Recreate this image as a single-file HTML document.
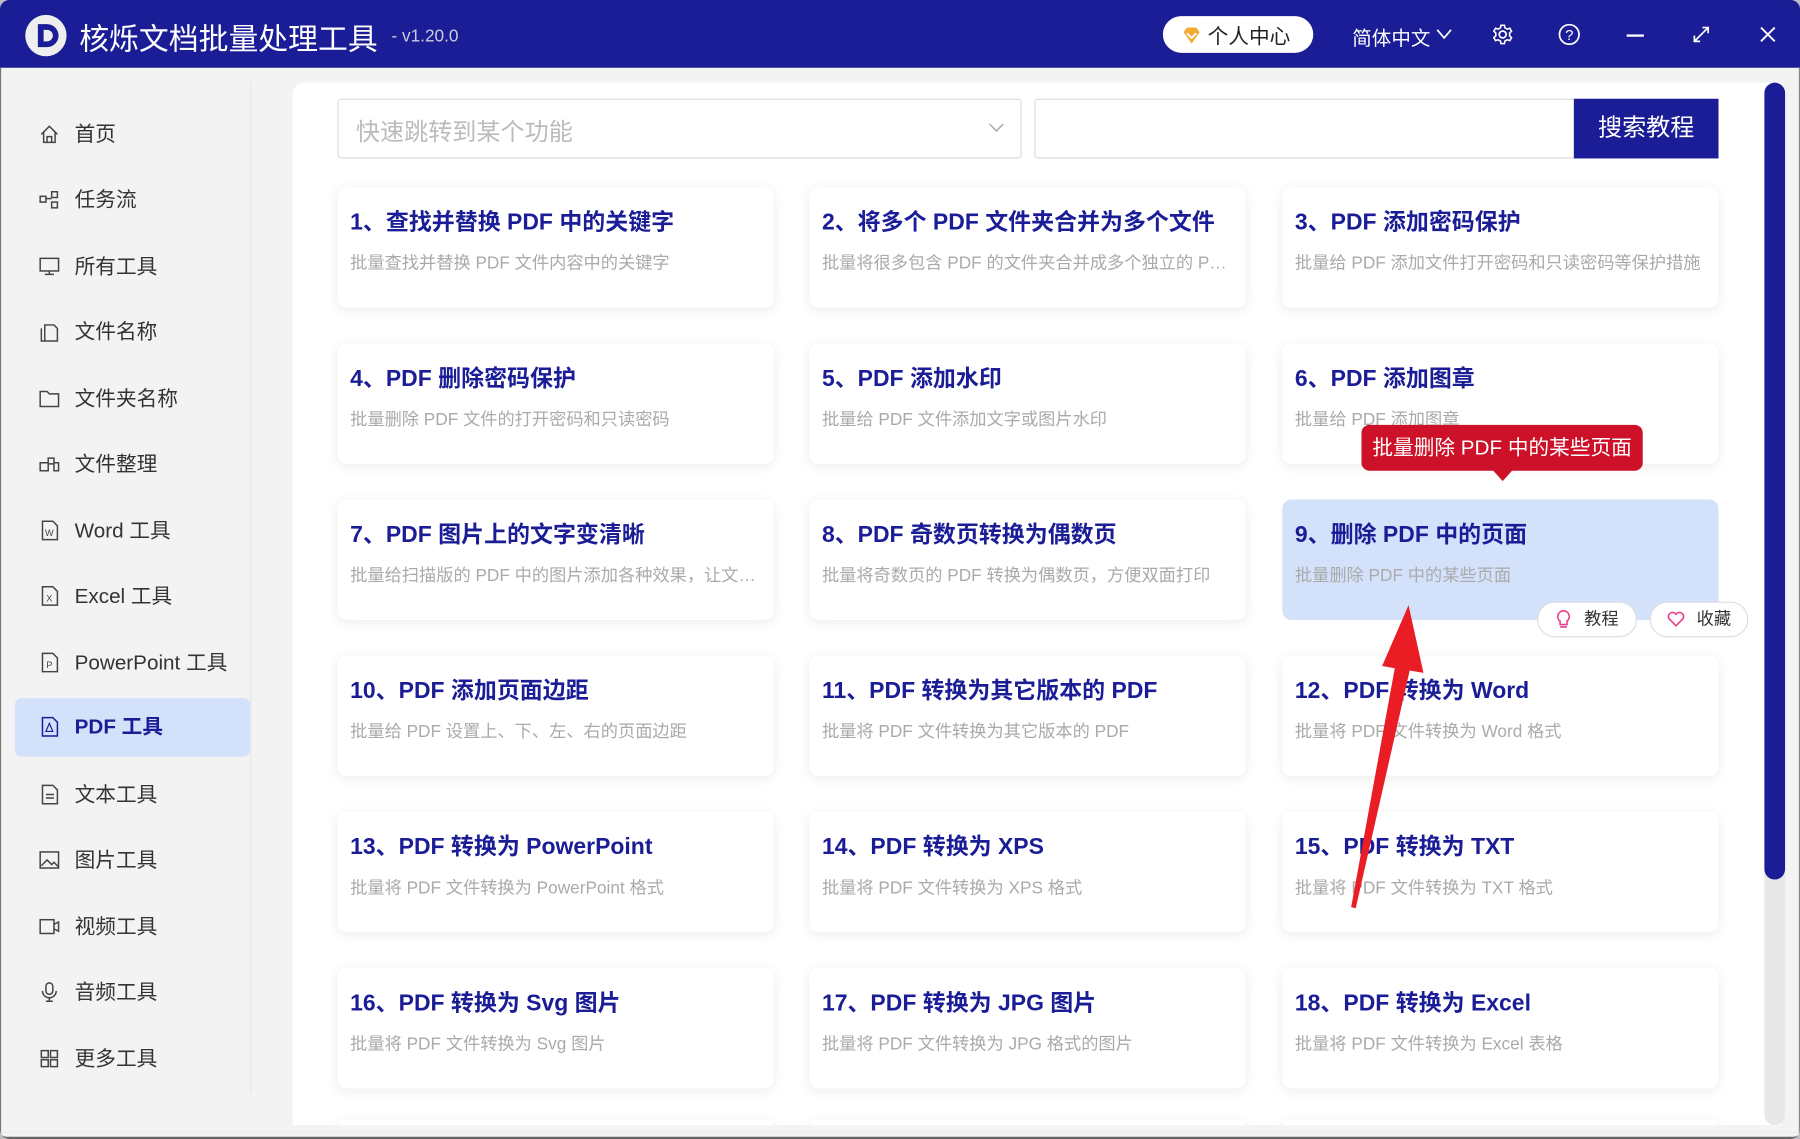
<!DOCTYPE html>
<html><head><meta charset="utf-8">
<style>
*{margin:0;padding:0;box-sizing:border-box}
html,body{width:1800px;height:1139px;overflow:hidden;background:#bdbdc2}
#w{position:absolute;left:0;top:0;width:1568px;height:992px;transform:scale(1.147959,1.148185);transform-origin:0 0;font-family:"Liberation Sans","Noto Sans CJK SC",sans-serif;background:#f3f3f3;overflow:hidden;border-radius:8px 8px 8px 8px}
#tb{position:absolute;left:0;top:0;width:1568px;height:59px;background:#1a1d96}
.abs{position:absolute}
#side .it{position:absolute;left:13px;width:205px;height:51px;font-size:18px;color:#333;line-height:51px;padding-left:52px;border-radius:6px}
#side .it svg{position:absolute;left:21px;top:16px}
#side .act{background:#d3e1fb;color:#1a1d96;font-weight:bold}
#panel{position:absolute;left:255px;top:72px;width:1296px;height:908px;background:#fff;border-radius:10px 0 0 0}
.card{position:absolute;width:380px;height:105px;background:#fff;border-radius:8px;box-shadow:0 2px 10px rgba(0,0,0,0.08)}
.card h3{position:absolute;left:11px;top:14px;font-size:20px;color:#1a1d96;font-weight:bold;white-space:nowrap}
.card p{position:absolute;left:11px;top:55px;font-size:15px;color:#aaa;white-space:nowrap;width:360px;overflow:hidden;text-overflow:ellipsis}
.pill{position:absolute;height:31px;background:#fff;border:1px solid #ddd;border-radius:16px;font-size:15px;color:#333;line-height:29px}
</style></head><body><div id="w">
<div id="tb">
 <svg class="abs" style="left:21px;top:12px" width="38" height="38" viewBox="0 0 38 38"><circle cx="19" cy="19" r="18" fill="#eee"/><path d="M12 9h8a10 10 0 0 1 0 20h-8z" fill="#1a1d96"/><path d="M17 14h3a5 5 0 0 1 0 10h-3z" fill="#eee"/></svg>
 <div class="abs" style="left:69px;top:14px;font-size:26px;color:#fff">核烁文档批量处理工具</div>
 <div class="abs" style="left:341px;top:23px;font-size:15px;color:#ccd">- v1.20.0</div>
 <div class="abs" style="left:1013px;top:14px;width:131px;height:32px;background:#fff;border-radius:16px"></div>
 <svg class="abs" style="left:1029px;top:22px" width="18" height="18" viewBox="0 0 18 18"><path d="M2 6l3-4h8l3 4-7 10z" fill="#f4a935"/><path d="M5 7l4 4 4-4" stroke="#fff" stroke-width="1.6" fill="none"/></svg>
 <div class="abs" style="left:1052px;top:18px;font-size:18px;color:#222">个人中心</div>
 <div class="abs" style="left:1178px;top:19px;font-size:17px;color:#fff">简体中文</div>
 <svg class="abs" style="left:1251px;top:24px" width="14" height="12"><path d="M1 2l6 7 6-7" stroke="#fff" stroke-width="1.5" fill="none"/></svg>
 <svg class="abs" style="left:1299px;top:20px" width="20" height="20" viewBox="0 0 20 20"><circle cx="10" cy="10" r="3" stroke="#fff" stroke-width="1.5" fill="none"/><path d="M8.5 2h3l.5 2.3 2 1.1 2.2-.8 1.5 2.6-1.7 1.6v2.4l1.7 1.6-1.5 2.6-2.2-.8-2 1.1-.5 2.3h-3l-.5-2.3-2-1.1-2.2.8-1.5-2.6 1.7-1.6V8.8L2.3 7.2l1.5-2.6 2.2.8 2-1.1z" stroke="#fff" stroke-width="1.4" fill="none"/></svg>
 <svg class="abs" style="left:1357px;top:20px" width="20" height="20"><circle cx="10" cy="10" r="8.5" stroke="#fff" stroke-width="1.5" fill="none"/><text x="10" y="15" font-size="13" fill="#fff" text-anchor="middle" font-family="Liberation Sans">?</text></svg>
 <div class="abs" style="left:1417px;top:30px;width:15px;height:2px;background:#fff"></div>
 <svg class="abs" style="left:1474px;top:22px" width="16" height="16"><path d="M2 14L14 2M9 2h5v5M2 9v5h5" stroke="#fff" stroke-width="1.5" fill="none"/></svg>
 <svg class="abs" style="left:1532px;top:22px" width="16" height="16"><path d="M2 2l12 12M14 2L2 14" stroke="#fff" stroke-width="1.6"/></svg>
</div>
<div class="abs" style="left:218px;top:72px;width:1px;height:880px;background:#e6e6e6"></div>
<div id="side">
 <div class="it" style="top:92px"><svg width="18" height="18"><path d="M2 9l7-7 7 7M4 7v9h10V7M7 16v-5h4v5" stroke="#444" stroke-width="1.3" fill="none"/></svg>首页</div>
 <div class="it" style="top:149px"><svg width="18" height="18"><rect x="1" y="6" width="5" height="5" stroke="#444" fill="none" stroke-width="1.3"/><rect x="11" y="2" width="5" height="5" stroke="#444" fill="none" stroke-width="1.3"/><rect x="11" y="11" width="5" height="5" stroke="#444" fill="none" stroke-width="1.3"/><path d="M6 8h5" stroke="#444" stroke-width="1.3"/></svg>任务流</div>
 <div class="it" style="top:207px"><svg width="18" height="18"><rect x="1" y="2" width="16" height="11" stroke="#444" fill="none" stroke-width="1.3"/><path d="M5 16h8M9 13v3" stroke="#444" stroke-width="1.3"/></svg>所有工具</div>
 <div class="it" style="top:264px"><svg width="18" height="18"><path d="M5 3h8l3 3v11H5zM2 6v11h3" stroke="#444" fill="none" stroke-width="1.3"/></svg>文件名称</div>
 <div class="it" style="top:322px"><svg width="18" height="18"><path d="M1 3h6l2 2h8v11H1z" stroke="#444" fill="none" stroke-width="1.3"/></svg>文件夹名称</div>
 <div class="it" style="top:379px"><svg width="18" height="18"><path d="M1 8h7v7H1zM8 4h5v5H8zM13 8h4v7h-4z" stroke="#444" fill="none" stroke-width="1.3"/></svg>文件整理</div>
 <div class="it" style="top:437px"><svg width="18" height="18"><path d="M3 1h9l4 4v12H3z" stroke="#444" fill="none" stroke-width="1.3"/><text x="9" y="14" font-size="8" fill="#444" text-anchor="middle">W</text></svg>Word 工具</div>
 <div class="it" style="top:494px"><svg width="18" height="18"><path d="M3 1h9l4 4v12H3z" stroke="#444" fill="none" stroke-width="1.3"/><text x="9" y="14" font-size="8" fill="#444" text-anchor="middle">X</text></svg>Excel 工具</div>
 <div class="it" style="top:552px"><svg width="18" height="18"><path d="M3 1h9l4 4v12H3z" stroke="#444" fill="none" stroke-width="1.3"/><text x="9" y="14" font-size="8" fill="#444" text-anchor="middle">P</text></svg>PowerPoint 工具</div>
 <div class="it act" style="top:608px"><svg width="18" height="18"><path d="M3 1h9l4 4v12H3z" stroke="#1a1d96" fill="none" stroke-width="1.3"/><path d="M6 13l3-7 3 7z" stroke="#1a1d96" fill="none"/></svg>PDF 工具</div>
 <div class="it" style="top:667px"><svg width="18" height="18"><path d="M3 1h9l4 4v12H3zM6 9h7M6 12h7" stroke="#444" fill="none" stroke-width="1.3"/></svg>文本工具</div>
 <div class="it" style="top:724px"><svg width="18" height="18"><rect x="1" y="2" width="16" height="14" stroke="#444" fill="none" stroke-width="1.3"/><path d="M2 14l5-5 4 4 2-2 4 4" stroke="#444" fill="none" stroke-width="1.3"/></svg>图片工具</div>
 <div class="it" style="top:782px"><svg width="18" height="18"><rect x="1" y="3" width="12" height="12" stroke="#444" fill="none" stroke-width="1.3"/><path d="M13 7l4-2v8l-4-2" stroke="#444" fill="none" stroke-width="1.3"/></svg>视频工具</div>
 <div class="it" style="top:839px"><svg width="18" height="18"><rect x="6" y="1" width="6" height="10" rx="3" stroke="#444" fill="none" stroke-width="1.3"/><path d="M3 8a6 6 0 0 0 12 0M9 14v3M6 17h6" stroke="#444" fill="none" stroke-width="1.3"/></svg>音频工具</div>
 <div class="it" style="top:897px"><svg width="18" height="18"><path d="M2 2h6v6H2zM10 2h6v6h-6zM2 10h6v6H2zM10 10h6v6h-6z" stroke="#444" fill="none" stroke-width="1.3"/></svg>更多工具</div>
</div>
<div id="panel"></div>
<div class="abs" style="left:294px;top:86px;width:596px;height:52px;border:1px solid #dcdcdc;border-radius:3px;background:#fff"></div>
<div class="abs" style="left:310px;top:99px;font-size:21px;color:#bbb">快速跳转到某个功能</div>
<svg class="abs" style="left:861px;top:106px" width="14" height="10"><path d="M1 2l6 6 6-6" stroke="#aaa" stroke-width="1.3" fill="none"/></svg>
<div class="abs" style="left:901px;top:86px;width:471px;height:52px;border:1px solid #dcdcdc;border-radius:3px 0 0 3px;background:#fff"></div>
<div class="abs" style="left:1371px;top:86px;width:126px;height:52px;background:#1a1d96;color:#fff;font-size:21px;line-height:52px;text-align:center">搜索教程</div>

<div class="card" style="left:294px;top:163px"><h3>1、查找并替换 PDF 中的关键字</h3><p>批量查找并替换 PDF 文件内容中的关键字</p></div>
<div class="card" style="left:705px;top:163px"><h3>2、将多个 PDF 文件夹合并为多个文件</h3><p>批量将很多包含 PDF 的文件夹合并成多个独立的 PDF 文件</p></div>
<div class="card" style="left:1117px;top:163px"><h3>3、PDF 添加密码保护</h3><p>批量给 PDF 添加文件打开密码和只读密码等保护措施</p></div>
<div class="card" style="left:294px;top:299px"><h3>4、PDF 删除密码保护</h3><p>批量删除 PDF 文件的打开密码和只读密码</p></div>
<div class="card" style="left:705px;top:299px"><h3>5、PDF 添加水印</h3><p>批量给 PDF 文件添加文字或图片水印</p></div>
<div class="card" style="left:1117px;top:299px"><h3>6、PDF 添加图章</h3><p>批量给 PDF 添加图章</p></div>
<div class="card" style="left:294px;top:435px"><h3>7、PDF 图片上的文字变清晰</h3><p>批量给扫描版的 PDF 中的图片添加各种效果，让文字…</p></div>
<div class="card" style="left:705px;top:435px"><h3>8、PDF 奇数页转换为偶数页</h3><p>批量将奇数页的 PDF 转换为偶数页，方便双面打印</p></div>
<div class="card" style="left:1117px;top:435px;background:#d3e1fb;box-shadow:none"><h3>9、删除 PDF 中的页面</h3><p>批量删除 PDF 中的某些页面</p></div>
<div class="card" style="left:294px;top:571px"><h3>10、PDF 添加页面边距</h3><p>批量给 PDF 设置上、下、左、右的页面边距</p></div>
<div class="card" style="left:705px;top:571px"><h3>11、PDF 转换为其它版本的 PDF</h3><p>批量将 PDF 文件转换为其它版本的 PDF</p></div>
<div class="card" style="left:1117px;top:571px"><h3>12、PDF 转换为 Word</h3><p>批量将 PDF 文件转换为 Word 格式</p></div>
<div class="card" style="left:294px;top:707px"><h3>13、PDF 转换为 PowerPoint</h3><p>批量将 PDF 文件转换为 PowerPoint 格式</p></div>
<div class="card" style="left:705px;top:707px"><h3>14、PDF 转换为 XPS</h3><p>批量将 PDF 文件转换为 XPS 格式</p></div>
<div class="card" style="left:1117px;top:707px"><h3>15、PDF 转换为 TXT</h3><p>批量将 PDF 文件转换为 TXT 格式</p></div>
<div class="card" style="left:294px;top:843px"><h3>16、PDF 转换为 Svg 图片</h3><p>批量将 PDF 文件转换为 Svg 图片</p></div>
<div class="card" style="left:705px;top:843px"><h3>17、PDF 转换为 JPG 图片</h3><p>批量将 PDF 文件转换为 JPG 格式的图片</p></div>
<div class="card" style="left:1117px;top:843px"><h3>18、PDF 转换为 Excel</h3><p>批量将 PDF 文件转换为 Excel 表格</p></div>
<div class="card" style="left:294px;top:975px"></div><div class="card" style="left:705px;top:975px"></div><div class="card" style="left:1117px;top:975px"></div>

<div class="pill" style="left:1339px;top:524px;width:87px;padding-left:40px">教程</div>
<svg class="abs" style="left:1355px;top:531px" width="14" height="18"><path d="M7 1a5 5 0 0 0-3 9v3h6v-3a5 5 0 0 0-3-9zM4 15h6" stroke="#e83e8c" stroke-width="1.4" fill="none"/></svg>
<div class="pill" style="left:1437px;top:524px;width:86px;padding-left:40px">收藏</div>
<svg class="abs" style="left:1452px;top:532px" width="16" height="15"><path d="M8 13L2 7a3.2 3.2 0 0 1 6-4 3.2 3.2 0 0 1 6 4z" stroke="#e83e8c" stroke-width="1.4" fill="none"/></svg>

<div class="abs" style="left:1186px;top:370px;width:245px;height:40px;background:#cd1129;border-radius:7px;color:#fff;font-size:18px;line-height:40px;text-align:center">批量删除 PDF 中的某些页面</div>
<div class="abs" style="left:1300px;top:409px;width:0;height:0;border-left:9px solid transparent;border-right:9px solid transparent;border-top:10px solid #cd1129"></div>

<svg class="abs" style="left:1160px;top:520px" width="90" height="280"><path d="M17 270L55 62L44 60L67 7L80 66L68 64L21 271z" fill="#ea1c24"/></svg>

<div class="abs" style="left:1537px;top:72px;width:18px;height:908px;background:#e8e8e8;border-radius:9px"></div>
<div class="abs" style="left:1537px;top:72px;width:18px;height:694px;background:#1a1d96;border-radius:9px"></div>

<div class="abs" style="left:0;top:980px;width:1568px;height:12px;background:#f3f3f3"></div>
<div class="abs" style="left:0;top:986px;width:1568px;height:6px;border-bottom:2px solid #666;border-radius:0 0 8px 8px"></div>
<div class="abs" style="left:0;top:59px;width:1px;height:933px;background:#777"></div>
<div class="abs" style="left:1567px;top:59px;width:1px;height:933px;background:#888"></div>
</div></body></html>
